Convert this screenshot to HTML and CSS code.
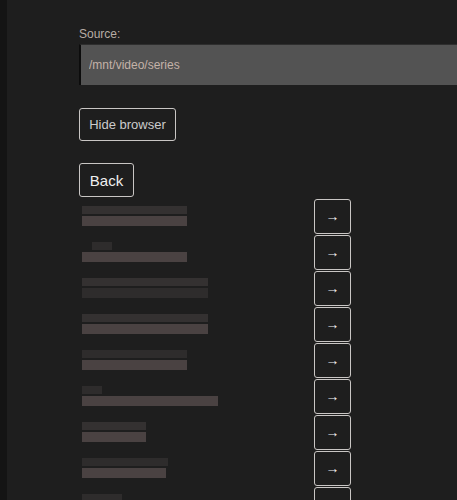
FILE: index.html
```html
<!DOCTYPE html>
<html lang="en">
<head>
  <meta charset="UTF-8">
  <meta name="viewport" content="width=device-width, initial-scale=1.0">
  <title>Browser</title>
  <link rel="stylesheet" href="styles.css">
</head>
<body>
<div class="layout">
  <div class="rail"></div>
  <div class="main">
    <label class="field-label" for="source">Source:</label>
    <input class="source-input" id="source" type="text" value="/mnt/video/series">

    <button class="btn btn-toggle">Hide browser</button>

    <button class="btn btn-back">Back</button>

    <ul class="entries">
      <li class="entry">
        <div class="entry-name"><span class="blur top" style="width: 105px"></span><span class="blur" style="width: 105px"></span></div>
        <button class="btn btn-go">&rarr;</button>
      </li>
      <li class="entry">
        <div class="entry-name"><span class="blur top faint" style="width: 20px; margin-left: 10px"></span><span class="blur" style="width: 105px"></span></div>
        <button class="btn btn-go">&rarr;</button>
      </li>
      <li class="entry">
        <div class="entry-name"><span class="blur top" style="width: 126px"></span><span class="blur faint" style="width: 126px"></span></div>
        <button class="btn btn-go">&rarr;</button>
      </li>
      <li class="entry">
        <div class="entry-name"><span class="blur top" style="width: 126px"></span><span class="blur" style="width: 126px"></span></div>
        <button class="btn btn-go">&rarr;</button>
      </li>
      <li class="entry">
        <div class="entry-name"><span class="blur top faint" style="width: 105px"></span><span class="blur" style="width: 105px"></span></div>
        <button class="btn btn-go">&rarr;</button>
      </li>
      <li class="entry">
        <div class="entry-name"><span class="blur top faint" style="width: 20px"></span><span class="blur" style="width: 136px"></span></div>
        <button class="btn btn-go">&rarr;</button>
      </li>
      <li class="entry">
        <div class="entry-name"><span class="blur top" style="width: 64px"></span><span class="blur" style="width: 64px"></span></div>
        <button class="btn btn-go">&rarr;</button>
      </li>
      <li class="entry">
        <div class="entry-name"><span class="blur top faint" style="width: 86px"></span><span class="blur" style="width: 84px"></span></div>
        <button class="btn btn-go">&rarr;</button>
      </li>
      <li class="entry">
        <div class="entry-name"><span class="blur top faint" style="width: 40px"></span><span class="blur" style="width: 74px"></span></div>
        <button class="btn btn-go">&rarr;</button>
      </li>
    </ul>
  </div>
</div>
</body>
</html>
```

FILE: styles.css
```css
body {
  margin: 0;
  font-family: "Liberation Sans", Arial, sans-serif;
  background-color: #1e1e1e;
  color: #dddddd;
  overflow: hidden;
}

.layout {
  display: flex;
  min-height: 100vh;
}

.rail {
  width: 7px;
  flex-shrink: 0;
  background-color: #141414;
}

.main {
  flex: 1;
  padding: 27px 0 0 72px;
  min-width: 0;
}

.field-label {
  display: block;
  font-size: 12px;
  color: #b8aca4;
  margin-bottom: 3px;
}

.source-input {
  display: block;
  width: 100%;
  height: 41px;
  box-sizing: border-box;
  padding: 0 8px;
  margin: 0;
  border: none;
  border-top: 1px solid #2e2e2e;
  border-left: 2px solid #0c0c0c;
  background-color: #535353;
  color: #c4b2a8;
  font-family: inherit;
  font-size: 12px;
  outline: none;
}

.btn {
  display: block;
  box-sizing: border-box;
  background-color: #1e1e1e;
  color: #dddddd;
  border: 1px solid #c9c6c4;
  border-radius: 3px;
  font-family: inherit;
  cursor: pointer;
  padding: 0;
}

.btn-toggle {
  margin-top: 23px;
  width: 97px;
  height: 33px;
  font-size: 13px;
  color: #cccccc;
}

.btn-back {
  margin-top: 22px;
  width: 55px;
  height: 34px;
  font-size: 15px;
  color: #f0f0f0;
}

.entries {
  list-style: none;
  margin: 1px 0 0;
  padding: 0;
}

.entry {
  display: flex;
  align-items: center;
  height: 36px;
}

.entry-name {
  width: 235px;
  display: flex;
  flex-direction: column;
  gap: 2px;
  padding-left: 3px;
  box-sizing: border-box;
}

/* names are masked */
.blur {
  display: block;
  height: 10px;
  background-color: #4a4242;
  filter: blur(0.6px);
}

.blur.top {
  height: 8px;
  background-color: #343131;
}

.blur.faint {
  background-color: #2e2c2c;
}

.btn-go {
  flex-shrink: 0;
  width: 37px;
  height: 35px;
  font-size: 14px;
  color: #f2f2f2;
}
```
